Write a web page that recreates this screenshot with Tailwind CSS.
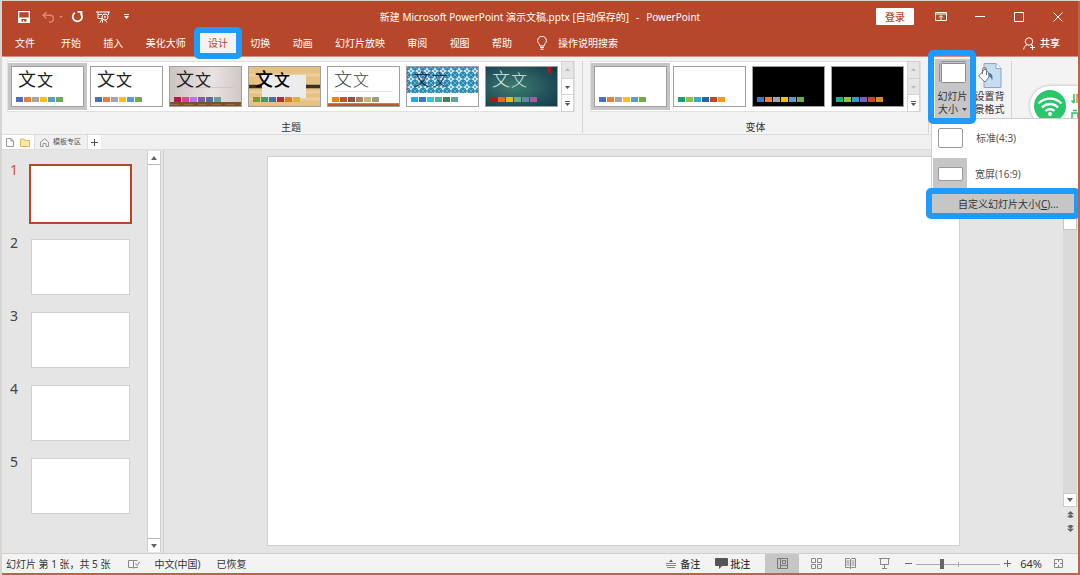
<!DOCTYPE html>
<html lang="zh-CN">
<head>
<meta charset="utf-8">
<title>新建 Microsoft PowerPoint 演示文稿.pptx - PowerPoint</title>
<script src="https://cdn.jsdelivr.net/npm/@tailwindcss/browser@4"></script>
</head>
<body class="h-screen bg-[#d8d4d2] font-['Noto_Sans','Noto_Sans_CJK_SC',sans-serif] text-[10px] leading-[14px] text-[#333]">
<div class="h-full pt-px pl-0.5">
<div class="relative flex h-full min-h-[480px] flex-col overflow-hidden border-r-2 border-b-2 border-[#c4604a] bg-[#e5e5e5]">

  <header class="border-b border-[#d98d7b] bg-[#b7472a] pt-0.5 text-white">
    <div class="grid h-[27px] grid-cols-[1fr_auto_1fr] items-center">
      <div class="flex items-center pl-4">
        <button aria-label="保存"><svg class="block size-3" viewBox="0 0 12 12"><path d="M.7.7h10.6v10.6H.7z" fill="none" stroke="#fff" stroke-width="1.3"/><path d="M1 6.500h10V11H8.500V8h-5v3H1z" fill="#fff"/><path d="M5 9h1.200v2H5z" fill="#fff"/></svg></button>
        <button aria-label="撤消" class="ml-3"><svg class="block h-3 w-[13px]" viewBox="0 0 13 12" fill="none" stroke="#d98873" stroke-width="1.400"><path d="M4.500 1 1 4.300 4.500 7.600M1 4.300h7a3.300 3.300 0 0 1 0 6.700H7"/></svg></button>
        <button aria-label="撤消选项" class="ml-1"><svg class="block size-1" viewBox="0 0 4 4"><path d="M0 1h4L2 3z" fill="#d98873"/></svg></button>
        <button aria-label="重复" class="ml-2"><svg class="block size-[13px]" viewBox="0 0 13 13" fill="none" stroke="#fff" stroke-width="1.800"><path d="M4 2.700A4.700 4.700 0 1 0 9.500 3.200M6.500 1.800h4v4"/></svg></button>
        <button aria-label="从头开始放映" class="ml-3"><svg class="block h-3 w-[14px]" viewBox="0 0 14 12" fill="none" stroke="#fff"><path d="M0 1h14M2 1v6.500h4M2 3.500h4M12.500 1v3M6.500 7.500 4 11.500M6.500 9v2.500M9 9l2 2.500"/><circle cx="9" cy="6" r="3"/><path d="m8.300 4.600 2 1.400-2 1.400z" fill="#fff" stroke="none"/></svg></button>
        <button aria-label="自定义快速访问工具栏" class="ml-3.5"><svg class="block h-[5px] w-[5px]" viewBox="0 0 5 5" fill="#fff"><path d="M0 0h5v1H0zM0 2h5L2.500 5z"/></svg></button>
      </div>
      <h1>新建 Microsoft PowerPoint 演示文稿.pptx [自动保存的]<span class="mx-[7px]">-</span>PowerPoint</h1>
      <div class="flex items-center justify-end pr-[15px]">
        <button class="mr-[21px] h-[17px] w-[38px] rounded-[1px] bg-white font-medium text-[#b7472a]">登录</button>
        <button aria-label="功能区显示选项" class="mr-7"><svg class="block h-[9px] w-3" viewBox="0 0 12 9" fill="none" stroke="#fff"><path d="M.5.5h11v8H.5zM.5 2h11M6 8V4M4 5.500l2-2 2 2"/></svg></button>
        <button aria-label="最小化" class="mr-[29px]"><svg class="block h-[9px] w-[10px]" viewBox="0 0 10 9"><path d="M0 4.500h10" stroke="#fff"/></svg></button>
        <button aria-label="最大化" class="mr-[29px]"><svg class="block size-[10px]" viewBox="0 0 10 10"><path d="M.5.5h9v9h-9z" fill="none" stroke="#fff"/></svg></button>
        <button aria-label="关闭"><svg class="block size-[10px]" viewBox="0 0 10 10"><path d="m.5.5 9 9m0-9-9 9" fill="none" stroke="#fff"/></svg></button>
      </div>
    </div>
    <nav class="flex h-[26px] items-center pl-[13px]">
      <button class="mr-[26px]">文件</button>
      <div class="flex w-[451px] items-center justify-between">
        <button>开始</button><button>插入</button><button>美化大师</button>
        <div class="relative z-20 -mx-2">
          <button aria-current="page" class="block h-5 w-9 bg-[#f3f3f3] text-[#b7472a]">设计</button>
          <span class="pointer-events-none absolute -inset-x-1.5 -inset-y-1.5 rounded-[5px] border-[6px] border-[#1e9bff]"></span>
        </div>
        <button>切换</button><button>动画</button><button>幻灯片放映</button><button>审阅</button><button>视图</button><button>帮助</button>
      </div>
      <button class="ml-[25px] flex items-center gap-[11px]"><svg class="block h-[14px] w-[10px]" viewBox="0 0 10 14" fill="none" stroke="#fff"><path d="M3 10C3 8 .6 7.200.6 4.700a4.400 4.400 0 0 1 8.800 0C9.400 7.200 7 8 7 10zM3 11.500h4M3.500 13.200h3"/></svg>操作说明搜索</button>
      <button class="mr-[18px] ml-auto flex items-center gap-1 font-medium"><svg class="block size-[13px]" viewBox="0 0 13 13" fill="none" stroke="#fff"><circle cx="6" cy="4.500" r="3.700"/><path d="M.7 12.500C1 10 2.300 8.300 4.200 7.800M7.700 7.800l1.500 1M9.500 8v5M7 10.500h5"/></svg>共享</button>
    </nav>
  </header>

  <section aria-label="设计" class="relative z-10 flex h-[78px] shrink-0 border-b border-[#dcdcdc] bg-[#f3f3f3] pt-1 pl-[5px]">
    <div>
      <div class="flex h-[51px] border border-[#e1e1e1] bg-white pl-[3px]">
        <div id="themes" class="flex items-center gap-1.5 pr-[3px]"></div>
        <div class="-my-px flex w-[13px] flex-col divide-y divide-[#d4d4d4] border border-[#d4d4d4]">
          <button aria-label="上一行主题" class="flex flex-1 items-center justify-center bg-[#e6e6e6]"><svg class="h-1 w-[5px]" viewBox="0 0 5 4"><path d="M0 3h5L2.500 0z" fill="#bbb"/></svg></button>
          <button aria-label="下一行主题" class="flex h-4 items-center justify-center"><svg class="h-1 w-[5px]" viewBox="0 0 5 4"><path d="M0 1h5L2.500 4z" fill="#555"/></svg></button>
          <button aria-label="其他主题" class="flex h-4 items-center justify-center"><svg class="h-[5px] w-[5px]" viewBox="0 0 5 5"><path d="M0 0h5v1H0zM0 2h5L2.500 5z" fill="#555"/></svg></button>
        </div>
      </div>
      <h2 class="mt-2 text-center">主题</h2>
    </div>
    <div class="mx-[7px] h-[72px] w-px bg-[#d4d4d4]"></div>
    <div>
      <div class="flex h-[51px] border border-[#e1e1e1] bg-white pl-[3px]">
        <div id="variants" class="flex items-center gap-1.5 pr-[3px]"></div>
        <div class="-my-px flex w-[13px] flex-col divide-y divide-[#d4d4d4] border border-[#d4d4d4]">
          <button aria-label="上一行变体" class="flex flex-1 items-center justify-center bg-[#e6e6e6]"><svg class="h-1 w-[5px]" viewBox="0 0 5 4"><path d="M0 3h5L2.500 0z" fill="#bbb"/></svg></button>
          <button aria-label="下一行变体" class="flex h-4 items-center justify-center bg-[#e6e6e6]"><svg class="h-1 w-[5px]" viewBox="0 0 5 4"><path d="M0 1h5L2.500 4z" fill="#bbb"/></svg></button>
          <button aria-label="其他变体" class="flex h-4 items-center justify-center"><svg class="h-[5px] w-[5px]" viewBox="0 0 5 5"><path d="M0 0h5v1H0zM0 2h5L2.500 5z" fill="#555"/></svg></button>
        </div>
      </div>
      <h2 class="mt-2 text-center">变体</h2>
    </div>
    <div class="ml-[7px] h-[72px] w-px bg-[#d4d4d4]"></div>

    <div class="relative z-10 -mt-0.5 ml-1.5">
      <button aria-haspopup="menu" aria-expanded="true" class="flex h-[59px] w-[35px] flex-col items-center bg-[#c6c6c6] pt-0.5 leading-[13px]">
        <svg class="mb-[7px] block h-[22px] w-[27px] shrink-0" viewBox="0 0 27 22" fill="none"><path d="M3 .5h23M.5 3v17" stroke="#7896b8"/><path d="M3 0v2M26 0v2M0 3h2M0 20h2" stroke="#7896b8"/><rect x="2.500" y="2.500" width="24" height="19" rx="1" fill="#fff" stroke="#8a8a8a"/></svg>
        <span>幻灯片</span>
        <span class="flex items-center gap-1">大小<svg class="h-[3px] w-[5px]" viewBox="0 0 5 3"><path d="M0 0h5L2.500 3z" fill="#444"/></svg></span>
      </button>
      <span class="pointer-events-none absolute -top-[9px] -right-1.5 -left-[7px] h-[74px] rounded-[5px] border-[6px] border-[#1e9bff]"></span>
      <div role="menu" class="absolute top-[59px] -left-1 -z-10 w-[148px] border border-[#cfcfcf] bg-white pt-1 text-[#555]">
        <button role="menuitem" class="flex h-[29px] w-full items-center gap-[13px] pl-1.5"><svg class="block h-5 w-[25px]" viewBox="0 0 25 20"><rect x=".5" y=".5" width="24" height="19" rx="1.500" fill="#fff" stroke="#999"/></svg>标准(4:3)</button>
        <button role="menuitem" class="mt-1.5 flex h-8 w-full items-center gap-2 pl-px"><span class="flex h-8 w-[34px] items-center justify-center bg-[#c6c6c6]"><svg class="block h-[14px] w-[25px]" viewBox="0 0 25 14"><rect x=".5" y=".5" width="24" height="13" rx="1.500" fill="#fff" stroke="#999"/></svg></span>宽屏(16:9)</button>
        <div class="relative mt-1 -mb-px">
          <button role="menuitem" class="flex h-[19px] w-full items-center bg-[#c6c6c6] pl-[26px] text-[#333]">自定义幻灯片大小(<u>C</u>)...</button>
          <span class="pointer-events-none absolute -top-1.5 -right-0.5 -bottom-1.5 -left-1.5 rounded-[5px] border-[6px] border-[#1e9bff]"></span>
        </div>
      </div>
    </div>
    <button class="-mt-0.5 ml-[3px] flex w-[33px] flex-col items-center justify-start self-start pt-1 leading-[13px]">
      <svg class="mb-0.5 block h-[25px] w-6 shrink-0" viewBox="0 0 24 25"><path d="M6 .5h12l5 5v19H6z" fill="#c8dcf0" stroke="#86a6c8"/><path d="M18 .5v5h5" fill="#fff" stroke="#86a6c8"/><path d="M.7 13 7 6l5.500 6-5.500 7z" fill="#fff" stroke="#777"/><path d="M4.500 11V6.500a2 2 0 0 1 4 0V12" fill="none" stroke="#777"/><path d="M10 10c4 0 5.500 3 4 8-.500-3-1-4-3.500-4.500z" fill="#3f7ab5"/></svg>
      <span>设置背</span><span>景格式</span>
    </button>
    <div class="ml-[5px] h-[72px] w-px bg-[#d4d4d4]"></div>
    <div class="absolute top-[29px] -right-4 h-10 w-16 rounded-l-full bg-white p-1 shadow-[0_0_3px_#aaa]">
      <svg class="block h-8 w-[52px]" viewBox="0 0 52 32" fill="none"><circle cx="16" cy="16" r="16" fill="#28c76a"/><path d="M4.500 13.500a16 16 0 0 1 23 0M8 17.500a11 11 0 0 1 16 0M11.500 21a6.500 6.500 0 0 1 9 0" stroke="#fff" stroke-width="2.400"/><circle cx="16" cy="24" r="2" fill="#fff"/><path d="M40 4v9M37.500 10.500 40 13" stroke="#28c76a" stroke-width="1.600"/><path d="M43 13V4M45.500 6.500 43 4" stroke="#f2863c" stroke-width="1.600"/><path d="M38 23h6v6h-6zM39 20.500h4" stroke="#28c76a" stroke-width="1.500"/></svg>
    </div>
  </section>

  <div class="flex h-[15px] shrink-0 items-stretch border-b border-[#dedede] bg-[#f0f0f0] text-[8px] leading-[14px]">
    <div class="flex w-8 items-center gap-1.5 bg-white pl-1">
      <button aria-label="新建"><svg class="block h-[9px] w-2" viewBox="0 0 8 9" fill="none" stroke="#999"><path d="M.5.5H5l2.500 2.500v5.500h-7zM5 .5V3h2.500"/></svg></button>
      <button aria-label="打开"><svg class="block h-[9px] w-[10px]" viewBox="0 0 10 9"><path d="M.5 1h3.500l1 1.500h4.500v6h-9z" fill="#ffe9a0" stroke="#dcb65c"/></svg></button>
    </div>
    <button class="flex w-[54px] items-center gap-1 border-x border-[#ddd] pl-[5px] text-[7px] text-[#555]"><svg class="block size-[9px]" viewBox="0 0 9 9" fill="none" stroke="#999"><path d="M.5 4 4.500.7 8.500 4v4.500h-2.500V5.500H3v3H.5z"/></svg>模板专区</button>
    <button aria-label="新标签" class="flex w-[13px] items-center justify-center bg-white"><svg class="size-[7px]" viewBox="0 0 7 7"><path d="M3.500 0v7M0 3.500h7" stroke="#555"/></svg></button>
  </div>

  <main class="flex min-h-0 flex-1 border-b border-[#d0d0d0]">
    <ol id="slides" class="flex w-[145px] flex-col gap-[17px] overflow-hidden pt-4 pl-[7px]"></ol>
    <div class="my-px flex w-[14px] flex-col border-x border-[#cfcfcf] bg-white">
      <button aria-label="向上滚动" class="flex h-[13px] items-center justify-center"><svg class="h-1 w-[6px]" viewBox="0 0 6 4"><path d="M0 4h6L3 0z" fill="#666"/></svg></button>
      <div class="flex-1 border-y border-[#b8b8b8]"></div>
      <button aria-label="向下滚动" class="flex h-[13px] items-center justify-center"><svg class="h-1 w-[6px]" viewBox="0 0 6 4"><path d="M0 0h6L3 4z" fill="#666"/></svg></button>
    </div>
    <div class="ml-0.5 flex min-w-0 flex-1 justify-center border-l border-[#cfcfcf] pt-1.5 pb-[7px]">
      <div aria-label="幻灯片 1" class="aspect-video h-full border border-[#d0d0d0] bg-white"></div>
    </div>
    <div class="mr-px flex w-[14px] flex-col items-center bg-[#e5e5e5]">
      <div class="h-20 w-full border border-[#c4c4c4] bg-white"></div>
      <div class="w-full flex-1 bg-[#dadada]"></div>
      <button aria-label="向下" class="flex h-[14px] w-full items-center justify-center border border-[#ccc] bg-white"><svg class="h-1 w-[6px]" viewBox="0 0 6 4"><path d="M0 0h6L3 4z" fill="#666"/></svg></button>
      <button aria-label="上一张幻灯片" class="mt-1 mb-[7px]"><svg class="block h-[7px] w-[7px]" viewBox="0 0 7 7" fill="#666"><path d="M0 3.300h7L3.500 0zM0 6.200h7L3.500 3zM2 6h3v1H2z"/></svg></button>
      <button aria-label="下一张幻灯片" class="mb-[21px]"><svg class="block h-[7px] w-[7px]" viewBox="0 0 7 7" fill="#666"><path d="M0 .8h7L3.500 4zM0 3.700h7L3.500 7zM2 0h3v1H2z"/></svg></button>
    </div>
  </main>

  <footer class="flex h-[19px] shrink-0 items-center bg-[#f3f3f3] pl-1">
    <span>幻灯片 第 1 张，共 5 张</span>
    <button aria-label="拼写检查" class="mr-3.5 ml-[18px]"><svg class="block h-[10px] w-3" viewBox="0 0 12 10" fill="none" stroke="#888"><path d="M5.500 1.500V9M5.500 1.500H.5V8.500h4l1 .8 1-.8h3V7.500M5.500 1.500h4M7.500 4.500 9 6.500l3-4"/></svg></button>
    <button>中文(中国)</button>
    <span class="ml-4">已恢复</span>
    <div class="ml-auto flex items-center self-stretch">
      <button class="mr-[15px] flex items-center gap-1 font-medium"><svg class="block h-[9px] w-[10px]" viewBox="0 0 10 9"><path d="M0 4.500h10M0 6.500h10M1 8.500h8" stroke="#888"/><path d="M3 3h4L5 .5z" fill="#555"/></svg>备注</button>
      <button class="mr-[15px] flex items-center gap-0.5 font-medium"><svg class="block h-[11px] w-[13px]" viewBox="0 0 13 11"><path d="M1 0h11q1 0 1 1v6q0 1-1 1H7l-3 3V8H1Q0 8 0 7V1Q0 0 1 0z" fill="#555"/></svg>批注</button>
      <button aria-label="普通视图" class="flex w-[34px] items-center justify-center self-stretch bg-[#c6c6c6]"><svg class="h-[11px] w-[11px]" viewBox="0 0 11 11" fill="none" stroke="#777"><path d="M.5.5h10v10H.5zM3.500.5v10M3.500 7.500h7"/><path d="M5.500 2.500h3v3h-3z"/></svg></button>
      <button aria-label="幻灯片浏览" class="flex w-[34px] justify-center"><svg class="h-[11px] w-[11px]" viewBox="0 0 11 11" fill="none" stroke="#888"><path d="M.5.5h4v4h-4zM6.500.5h4v4h-4zM.5 6.500h4v4h-4zM6.500 6.500h4v4h-4z"/></svg></button>
      <button aria-label="阅读视图" class="flex w-[34px] justify-center"><svg class="h-[11px] w-[11px]" viewBox="0 0 11 11" fill="none" stroke="#888"><path d="M5.500 1.500v9M.5.5h4l1 1 1-1h4v9h-4l-1 1-1-1h-4zM1.500 3h3M1.500 5h3M1.500 7h3M6.500 3h3M6.500 5h3M6.500 7h3"/></svg></button>
      <button aria-label="幻灯片放映" class="flex w-[34px] justify-center"><svg class="h-[11px] w-[11px]" viewBox="0 0 11 11" fill="none" stroke="#888"><path d="M0 .5h11M1.500.5v6h8v-6M5.500 6.500v4M3 10.500h5"/></svg></button>
      <button aria-label="缩小" class="ml-1"><svg class="block size-[7px]" viewBox="0 0 7 7"><path d="M0 3.500h7" stroke="#666"/></svg></button>
      <div class="relative mx-1 flex h-3 w-[84px] items-center">
        <input type="range" aria-label="缩放" min="0" max="100" value="30" class="absolute inset-0 m-0 size-full opacity-0">
        <svg class="pointer-events-none block h-3 w-[84px]" viewBox="0 0 84 12"><path d="M0 6.500h84M42.500 4v5" stroke="#aaa"/><path d="M24 1h4v10h-4z" fill="#666"/></svg>
      </div>
      <button aria-label="放大"><svg class="block size-[7px]" viewBox="0 0 7 7"><path d="M0 3.500h7M3.500 0v7" stroke="#666"/></svg></button>
      <button class="mr-3 ml-[9px] text-[11px]">64%</button>
      <button aria-label="适应窗口" class="mr-[15px]"><svg class="block h-[9px] w-[9px]" viewBox="0 0 9 9" fill="none" stroke="#888"><path d="M.5.5h8v8h-8z"/><path d="M4.500 1v2M4.500 6v2M1 4.500h2M6 4.500h2"/></svg></button>
    </div>
  </footer>
</div>
</div>

<script>
const office = ['#4472c4','#ed7d31','#a5a5a5','#ffc000','#5b9bd5','#70ad47'];
const themes = [
  {name:'当前主题', sel:true, c:office, ink:'text-[#222]', art:''},
  {name:'Office 主题', c:office, ink:'text-[#222]', art:''},
  {name:'画廊', c:['#b8174a','#e0458c','#b974f5','#7f5bb0','#5a6aa8','#6a9aa8'], ink:'text-[#222]',
   art:'<defs><linearGradient id="g1"><stop stop-color="#cdc5c4"/><stop offset=".6" stop-color="#e8e3e1"/><stop offset="1" stop-color="#cfc8c6"/></linearGradient></defs><path fill="url(#g1)" d="M0 0h71v36H0z"/><path d="M14 20.500h51" stroke="#e0bfc5"/><path fill="#7a5230" d="M0 35h71v4H0z"/><path d="M0 37.500h71" stroke="#9a6c40" stroke-dasharray="9 5"/>'},
  {name:'木纹', c:['#7f9a2c','#3c9a78','#4472a8','#a83238','#dc7a2c','#dcb43c'], ink:'text-black font-medium',
   art:'<path fill="#e6c184" d="M0 0h71v39H0z"/><path d="M0 8h71M0 25h71M0 32h71" stroke="#eccf9b" stroke-width="3"/><path d="M0 19.500h15M56 19.500h15" stroke="#383026" stroke-width="3.500"/><path fill="#ececec" d="M13 8h44v23H13z"/>'},
  {name:'回顾', c:['#e8850c','#c0562c','#8a5844','#a08858','#c4b878','#98a088'], ink:'text-[#444] font-light',
   art:'<path d="M6 24.500h58" stroke="#e5e5e5"/><path fill="#c0562c" d="M0 36h71v3H0z"/><path fill="#e3a184" d="M0 36h71v.5H0z"/>'},
  {name:'积分', c:['#1cade4','#2683c6','#27ced7','#42ba97','#3e8853','#62a39f'], ink:'text-[#223] font-light',
   art:'<defs><pattern id="dots" width="8" height="8" patternUnits="userSpaceOnUse"><path fill="#2487b0" d="M0 0h8v8H0z"/><path fill="#d3e8f0" d="m4 0 1.500 2.500L8 4 5.500 5.500 4 8 2.500 5.500 0 4l2.500-1.500z"/><path d="m0 0 8 8M8 0 0 8" stroke="#7db8cf" stroke-width=".8"/><circle cx="4" cy="4" r="1" fill="#4c9dbe"/></pattern></defs><path fill="url(#dots)" d="M0 0h71v26H0z"/>'},
  {name:'离子', c:['#b01818','#e86a14','#e6b728','#6aac90','#5a8aa0','#9c5e9c'], ink:'text-[#d8e8e4] font-light',
   art:'<defs><radialGradient id="g2" cx=".4" cy=".5" r=".7"><stop stop-color="#3d7c6f"/><stop offset="1" stop-color="#173f50"/></radialGradient></defs><path fill="url(#g2)" d="M0 0h71v39H0z"/><path fill="#b01818" d="M61 0h4v6h-4z"/>'}
];
const variants = [
  {name:'变体 1', sel:true, c:office, art:''},
  {name:'变体 2', c:['#1c9c74','#8cc43c','#30acd0','#1c68b0','#c0481c','#f09c1c'], art:''},
  {name:'变体 3', c:office, art:'<path d="M0 0h71v39H0z"/>'},
  {name:'变体 4', c:['#24ac84','#98bc44','#3898cc','#8058c0','#cc4424','#d88828'], art:'<path d="M0 0h71v39H0z"/>'}
];
const thumb = t => `<button aria-label="${t.name}" class="relative h-[41px] w-[73px] border border-[#a0a0a0] bg-white ${t.sel ? 'ring-[3px] ring-[#c6c6c6]' : ''}">
  <svg class="absolute inset-0 size-full" viewBox="0 0 71 39" preserveAspectRatio="none">${t.art}</svg>
  <span class="relative flex h-full flex-col justify-end pb-1 pl-1">
    ${t.ink ? `<span class="mb-[7px] flex items-baseline gap-px pl-0.5 leading-5 ${t.ink}"><span class="text-[18px]">文</span><span class="text-[16px]">文</span></span>` : ''}
    <span class="flex gap-px">${t.c.map(c => `<span class="h-[5px] w-[7px]" style="background:${c}"></span>`).join('')}</span>
  </span></button>`;
document.getElementById('themes').innerHTML = themes.map(thumb).join('');
document.getElementById('variants').innerHTML = variants.map(thumb).join('');
document.getElementById('slides').innerHTML = [1,2,3,4,5].map(n => `<li class="flex h-14 shrink-0 gap-[11px] text-[14px] leading-4 ${n === 1 ? 'text-[#d35230]' : 'text-[#444]'}">
  <span class="-mt-1 w-[11px] pl-px">${n}</span><button aria-label="幻灯片 ${n}" class="h-14 w-[99px] bg-white ${n === 1 ? 'ring-2 ring-[#b7472a]' : 'border border-[#d0d0d0]'}"></button></li>`).join('');
</script>
</body>
</html>
